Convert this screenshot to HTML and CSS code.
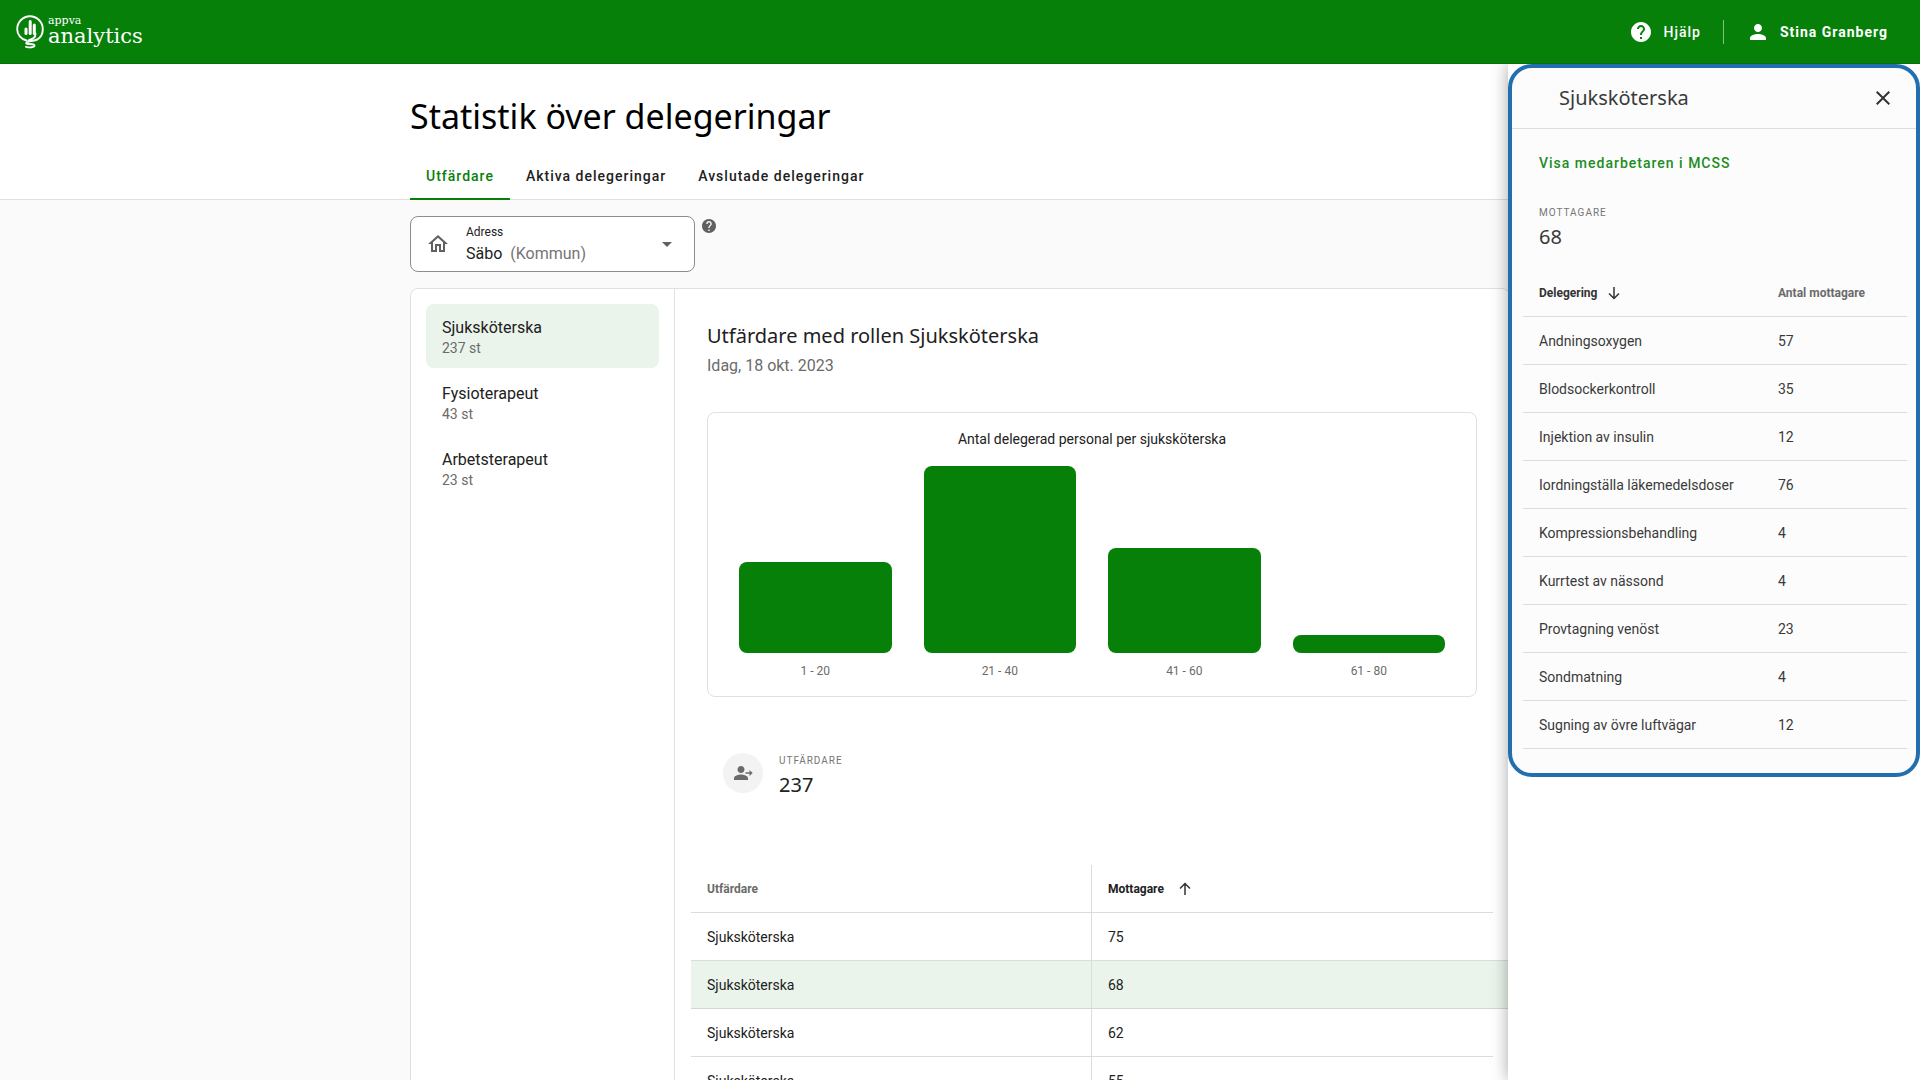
FILE: index.html
```html
<!DOCTYPE html>
<html lang="sv">
<head>
    <meta charset="UTF-8">
    <meta name="viewport" content="width=device-width, initial-scale=1.0">
    <title>Appva Analytics</title>
    <link rel="stylesheet" href="styles.css">
</head>
<body>
    <header class="topbar">
        <a class="logo" href="#">
            <svg class="logo-mark" viewBox="0 0 28 34" width="28" height="34" aria-hidden="true">
                <path d="M10.500 25.500C5 24.300 1.200 19.700 1.200 14.200 1.200 7 7 1.200 14 1.200S26.800 7 26.800 14.200c0 4.200-2 8-5.300 10.200-3 2-10.500 1.600-11.300 3.600-.5 2 8.300 0 8.300 2.600 0 1.800-4.500 2.200-8.500 1.200M19.500 18.500c0 5-3 5.500-7 6.800" fill="none" stroke="#fff" stroke-width="1.900" stroke-linecap="round"/>
                <path d="M10 14v4.500M14.200 6.500v12M18.300 10v8.500" fill="none" stroke="#fff" stroke-width="3" stroke-linecap="round"/>
            </svg>
            <span class="logo-text">
                <span class="logo-small">appva</span>
                <span class="logo-big">analytics</span>
            </span>
        </a>
        <nav class="topbar-nav">
            <a class="topbar-link" href="#">
                <svg viewBox="0 0 24 24" width="24" height="24" aria-hidden="true"><path fill="#fff" d="M12 2C6.480 2 2 6.480 2 12s4.480 10 10 10 10-4.480 10-10S17.520 2 12 2zm1 17h-2v-2h2v2zm2.070-7.750l-.9.920C13.450 12.900 13 13.500 13 15h-2v-.5c0-1.100.45-2.100 1.170-2.830l1.240-1.260c.37-.36.59-.86.59-1.410 0-1.100-.9-2-2-2s-2 .9-2 2H8c0-2.210 1.790-4 4-4s4 1.790 4 4c0 .88-.36 1.680-.93 2.250z"/></svg>
                <span>Hjälp</span>
            </a>
            <a class="topbar-link user" href="#">
                <svg viewBox="0 0 24 24" width="24" height="24" aria-hidden="true"><path fill="#fff" d="M12 12c2.210 0 4-1.790 4-4s-1.790-4-4-4-4 1.790-4 4 1.790 4 4 4zm0 2c-2.670 0-8 1.340-8 4v2h16v-2c0-2.660-5.330-4-8-4z"/></svg>
                <span>Stina Granberg</span>
            </a>
        </nav>
    </header>

    <div class="page-head">
        <div class="container">
            <h1>Statistik över delegeringar</h1>
            <nav class="tabs">
                <a class="tab active" href="#">Utfärdare</a>
                <a class="tab" href="#">Aktiva delegeringar</a>
                <a class="tab" href="#">Avslutade delegeringar</a>
            </nav>
        </div>
    </div>

    <main class="container">
        <div class="filter">
            <button class="address" type="button" aria-haspopup="listbox">
                <svg viewBox="0 0 24 24" width="24" height="24" aria-hidden="true"><path fill="#616161" d="M12 5.690l5 4.500V18h-2v-6H9v6H7v-7.810l5-4.500M12 3L2 12h3v8h6v-6h2v6h6v-8h3L12 3z"/></svg>
                <span class="address-text">
                    <span class="address-label">Adress</span>
                    <span class="address-value">Säbo <span class="muted">(Kommun)</span></span>
                </span>
                <svg viewBox="0 0 24 24" width="24" height="24" aria-hidden="true"><path fill="#616161" d="M7 10l5 5 5-5z"/></svg>
            </button>
            <svg class="hint" viewBox="2 2 20 20" width="14" height="14" aria-hidden="true"><path fill="#616161" d="M12 2C6.480 2 2 6.480 2 12s4.480 10 10 10 10-4.480 10-10S17.520 2 12 2zm1 17h-2v-2h2v2zm2.070-7.750l-.9.920C13.450 12.900 13 13.500 13 15h-2v-.5c0-1.100.45-2.100 1.170-2.830l1.240-1.260c.37-.36.59-.86.59-1.410 0-1.100-.9-2-2-2s-2 .9-2 2H8c0-2.210 1.790-4 4-4s4 1.790 4 4c0 .88-.36 1.680-.93 2.250z"/></svg>
        </div>

        <div class="card">
            <ul class="roles">
                <li><a class="role active" href="#">Sjuksköterska <span>237 st</span></a></li>
                <li><a class="role" href="#">Fysioterapeut <span>43 st</span></a></li>
                <li><a class="role" href="#">Arbetsterapeut <span>23 st</span></a></li>
            </ul>
            <section class="content">
                <div class="content-head">
                    <h2>Utfärdare med rollen Sjuksköterska</h2>
                    <p>Idag, 18 okt. 2023</p>
                </div>

                <figure class="chart">
                    <figcaption>Antal delegerad personal per sjuksköterska</figcaption>
                    <div class="bars">
                        <div class="bar-col"><div class="bar" style="height: 91px"></div><span>1 - 20</span></div>
                        <div class="bar-col"><div class="bar" style="height: 187px"></div><span>21 - 40</span></div>
                        <div class="bar-col"><div class="bar" style="height: 105px"></div><span>41 - 60</span></div>
                        <div class="bar-col"><div class="bar" style="height: 18px"></div><span>61 - 80</span></div>
                    </div>
                </figure>

                <div class="stat">
                    <div class="stat-icon">
                        <svg viewBox="0 0 24 24" width="24" height="24" aria-hidden="true"><path fill="#6b6b6b" d="M10 12c2 0 3.500-1.600 3.500-3.500S12 5 10 5 6.500 6.600 6.500 8.500 8 12 10 12zm0 1.500c-2.500 0-7 1.200-7 3.700V19h14v-1.800c0-2.500-4.500-3.700-7-3.700zM14.500 11.200h4V9l3.200 3-3.200 3v-2.200h-4z"/></svg>
                    </div>
                    <div>
                        <div class="overline">Utfärdare</div>
                        <div class="figure-value">237</div>
                    </div>
                </div>

                <table class="issuers">
                    <thead>
                        <tr>
                            <th>Utfärdare</th>
                            <th class="sorted">Mottagare <svg class="arrow" viewBox="0 0 12 14" width="12" height="14" aria-hidden="true"><path d="M6 13V1.500M1 6.500l5-5 5 5" fill="none" stroke="#333" stroke-width="1.500"/></svg></th>
                        </tr>
                    </thead>
                    <tbody>
                        <tr><td>Sjuksköterska</td><td>75</td></tr>
                        <tr class="selected"><td>Sjuksköterska</td><td>68</td></tr>
                        <tr><td>Sjuksköterska</td><td>62</td></tr>
                        <tr><td>Sjuksköterska</td><td>55</td></tr>
                    </tbody>
                </table>
            </section>
        </div>
    </main>

    <aside class="drawer">
        <div class="drawer-box">
            <div class="drawer-head">
                <h2>Sjuksköterska</h2>
                <button class="close" type="button" aria-label="Stäng">
                    <svg viewBox="0 0 24 24" width="24" height="24" aria-hidden="true"><path fill="#333" d="M19 6.410L17.590 5 12 10.590 6.410 5 5 6.410 10.590 12 5 17.590 6.410 19 12 13.410 17.590 19 19 17.590 13.410 12z"/></svg>
                </button>
            </div>
            <a class="mcss" href="#">Visa medarbetaren i MCSS</a>
            <div class="drawer-stat">
                <div class="overline">Mottagare</div>
                <div class="figure-value">68</div>
            </div>
            <table class="delegations">
                <thead>
                    <tr>
                        <th class="sorted">Delegering <svg class="arrow" viewBox="0 0 12 14" width="12" height="14" aria-hidden="true"><path d="M6 1v11.500M1 7.500l5 5 5-5" fill="none" stroke="#333" stroke-width="1.500"/></svg></th>
                        <th>Antal mottagare</th>
                    </tr>
                </thead>
                <tbody>
                    <tr><td>Andningsoxygen</td><td>57</td></tr>
                    <tr><td>Blodsockerkontroll</td><td>35</td></tr>
                    <tr><td>Injektion av insulin</td><td>12</td></tr>
                    <tr><td>Iordningställa läkemedelsdoser</td><td>76</td></tr>
                    <tr><td>Kompressionsbehandling</td><td>4</td></tr>
                    <tr><td>Kurrtest av nässond</td><td>4</td></tr>
                    <tr><td>Provtagning venöst</td><td>23</td></tr>
                    <tr><td>Sondmatning</td><td>4</td></tr>
                    <tr><td>Sugning av övre luftvägar</td><td>12</td></tr>
                </tbody>
            </table>
        </div>
    </aside>
</body>
</html>
```

FILE: styles.css
```css
* {
    box-sizing: border-box;
    margin: 0;
    padding: 0;
}

body {
    height: 100vh;
    overflow: hidden;
    background: #fafafa;
    color: #212121;
    font-family: Roboto, sans-serif;
    font-size: 14px;
    line-height: 20px;
}

a {
    color: inherit;
    text-decoration: none;
}

ul {
    list-style: none;
}

svg {
    flex: none;
}

h1, h2, .figure-value {
    font-family: "Noto Sans", sans-serif;
    font-weight: 400;
}

.container {
    max-width: 1100px;
    margin: 0 auto;
}

/* top bar */
.topbar {
    display: flex;
    justify-content: space-between;
    align-items: center;
    height: 64px;
    padding: 0 32px 0 16px;
    background: #07800a;
    border-bottom: 1px solid #076f0a;
    color: #fff;
}

.logo {
    display: flex;
    gap: 4px;
}

.logo-text {
    display: flex;
    flex-direction: column;
    font-family: "DejaVu Serif", serif;
}

.logo-small {
    font-size: 11px;
    line-height: 12px;
}

.logo-big {
    font-size: 21px;
    line-height: 19px;
}

.topbar-nav {
    display: flex;
    align-items: center;
    font-weight: 500;
    letter-spacing: 1px;
}

.topbar-link {
    display: flex;
    align-items: center;
    gap: 10px;
}

.user {
    margin-left: 22px;
    padding-left: 22px;
    border-left: 1px solid #83c085;
    font-weight: 700;
}

/* page head */
.page-head {
    background: #fff;
    border-bottom: 1px solid #e0e0e0;
}

.page-head h1 {
    padding-top: 32px;
    color: #000;
    font-size: 34px;
    line-height: 40px;
}

.tabs {
    display: flex;
    height: 48px;
    margin: 16px 0 -1px;
}

.tab {
    padding: 0 16px;
    line-height: 48px;
    font-weight: 500;
    letter-spacing: 1px;
}

.tab.active {
    border-bottom: 2px solid #07800a;
    color: #07800a;
}

/* address filter */
.filter {
    display: flex;
    gap: 7px;
    margin: 16px 0;
}

.address {
    display: flex;
    align-items: center;
    gap: 16px;
    width: 285px;
    height: 56px;
    padding: 0 15px;
    background: #fff;
    border: 1px solid #8c8c8c;
    border-radius: 8px;
    color: #212121;
    font-family: inherit;
    text-align: left;
}

.address-text {
    flex: 1;
}

.address-label,
.address-value {
    display: block;
}

.address-label {
    font-size: 12px;
    line-height: 20px;
}

.address-value {
    font-size: 16px;
    line-height: 24px;
}

.muted {
    color: #757575;
    margin-left: 4px;
}

.hint {
    margin-top: 3px;
}

/* card */
.card {
    display: flex;
    background: #fff;
    border: 1px solid #e0e0e0;
    border-radius: 8px;
}

.roles {
    display: flex;
    flex-direction: column;
    gap: 2px;
    width: 264px;
    padding: 15px;
    border-right: 1px solid #e0e0e0;
}

.role {
    display: block;
    padding: 12px 16px;
    border-radius: 8px;
    font-size: 16px;
    line-height: 24px;
}

.role span {
    display: block;
    color: #6b6b6b;
    font-size: 14px;
    line-height: 16px;
}

.role.active {
    background: #eaf4eb;
}

.content {
    flex: 1;
    padding: 31px 16px 0;
}

.content-head {
    padding: 0 16px;
}

.content-head h2 {
    font-size: 20px;
    line-height: 32px;
}

.content-head p {
    color: #6b6b6b;
    font-size: 16px;
    line-height: 28px;
}

.chart {
    margin: 32px 16px 56px;
    padding: 16px 31px 7px;
    border: 1px solid #e0e0e0;
    border-radius: 8px;
    text-align: center;
}

.bars {
    display: flex;
    align-items: flex-end;
    gap: 32px;
    padding-top: 17px;
}

.bar-col {
    flex: 1;
    color: #6b6b6b;
    font-size: 12px;
    line-height: 36px;
}

.bar {
    background: #07800a;
    border-radius: 8px;
}

.stat {
    display: flex;
    align-items: flex-start;
    gap: 16px;
    padding: 0 32px;
    margin-bottom: 64px;
}

.stat-icon {
    display: flex;
    align-items: center;
    justify-content: center;
    width: 40px;
    height: 40px;
    border-radius: 50%;
    background: #f3f3f3;
}

.overline {
    color: #757575;
    font-size: 10px;
    line-height: 16px;
    letter-spacing: 1px;
    text-transform: uppercase;
}

.figure-value {
    font-size: 20px;
    line-height: 32px;
}

/* tables */
table {
    width: 100%;
    border-collapse: separate;
    border-spacing: 0;
    table-layout: fixed;
}

th, td {
    height: 48px;
    padding: 0 16px;
    border-bottom: 1px solid #dcdcdc;
    text-align: left;
}

th {
    color: #6b6b6b;
    font-size: 12px;
    font-weight: 700;
}

.sorted {
    color: #212121;
}

.arrow {
    margin-left: 8px;
    vertical-align: middle;
}

.issuers .arrow {
    margin-left: 12px;
}

.issuers th:first-child,
.issuers td:first-child {
    border-right: 1px solid #dcdcdc;
}

.selected td {
    position: relative;
    background: #eaf4eb;
    border-bottom-color: #cdd9ce;
}

/* the selected row runs on under the drawer */
.selected td:last-child::after {
    content: "";
    position: absolute;
    top: -1px;
    bottom: -1px;
    left: 100%;
    width: 16px;
    background: #eaf4eb;
    border-top: 1px solid #dcdcdc;
    border-bottom: 1px solid #cdd9ce;
}

/* drawer */
.drawer {
    position: fixed;
    top: 64px;
    right: 0;
    bottom: 0;
    width: 412px;
    background: #fff;
    box-shadow: 0 0 16px rgba(0, 0, 0, .35);
    clip-path: inset(0 0 0 -32px);
}

.drawer-box {
    padding-bottom: 24px;
    background: #fcfcfc;
    border: 4px solid #226fb0;
    border-radius: 24px;
    color: #3a3a3a;
}

.drawer-head {
    display: flex;
    align-items: center;
    justify-content: space-between;
    height: 61px;
    padding: 0 21px 0 47px;
    border-bottom: 1px solid #dcdcdc;
}

.drawer-head h2 {
    font-size: 20px;
    line-height: 28px;
}

.close {
    display: flex;
    background: none;
    border: 0;
}

.mcss {
    display: block;
    padding: 24px 27px;
    color: #218c24;
    font-weight: 500;
    letter-spacing: 1px;
}

.drawer-stat {
    padding: 8px 27px 16px;
}

.delegations {
    width: calc(100% - 20px);
    margin: 0 9px 0 11px;
}

.delegations .sorted {
    width: 239px;
    color: #333;
}
```
